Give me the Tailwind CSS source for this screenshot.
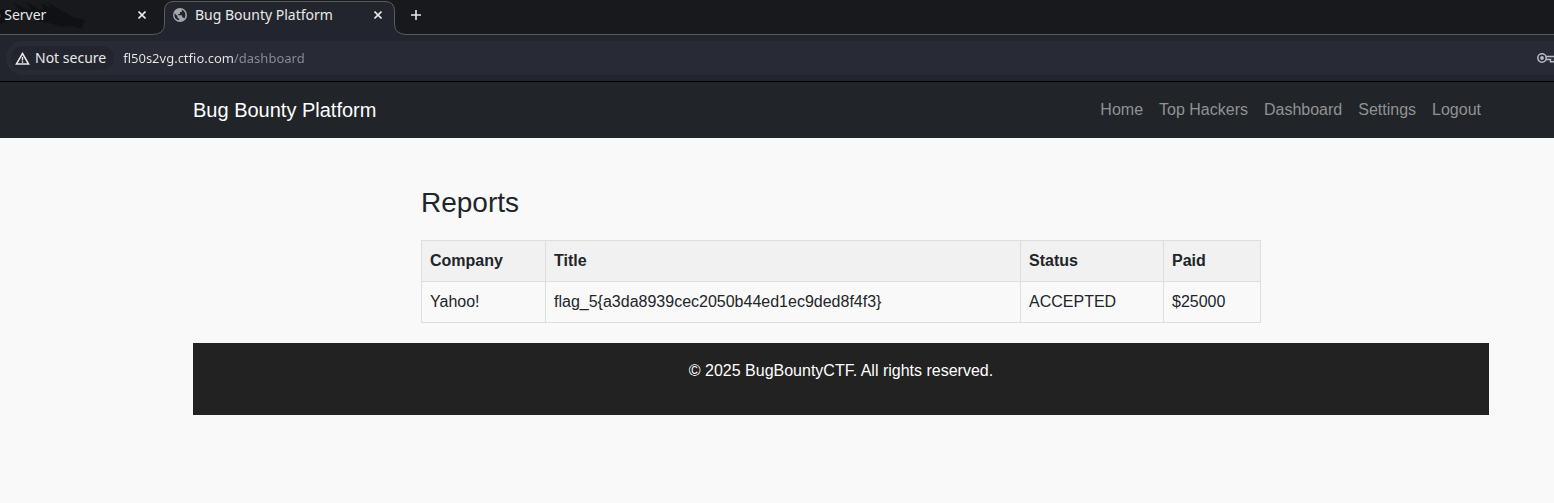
<!DOCTYPE html>
<html lang="en">
<head>
  <meta charset="UTF-8">
  <title>Bug Bounty Platform</title>
  <meta name="viewport" content="width=device-width, initial-scale=1.0">
  <script src="https://cdn.jsdelivr.net/npm/@tailwindcss/browser@4"></script>
</head>
<body class="bg-[#f9f9f9] text-[#212529] font-['Liberation_Sans',sans-serif] min-h-screen overflow-x-hidden">

  <!-- Browser window -->
  <div class="bg-[#23252e] border-b border-black text-[#e8e8e8] font-['Noto_Sans',sans-serif]">
    <!-- Tabs -->
    <div class="flex h-[35px] text-sm">
      <div class="relative flex items-center w-[152px] pr-1 pb-1 bg-[#18191d] border-b border-[#5b5c62]">
        <svg class="absolute left-0 top-0" width="90" height="30" viewBox="0 0 270 90" fill="#101114" aria-hidden="true">
          <path d="M0 28 L28 30 L60 34 L40 8 L80 28 L94 30 L78 6 L118 28 L132 30 L124 10 L158 28 L140 6 L196 38 L222 52 L255 60 L244 86 L214 78 L184 80 L150 70 L118 64 L86 46 L52 50 L20 62 L0 74 Z" />
        </svg>
        <span class="relative flex-1 -ml-2">b Server</span>
        <button class="relative flex items-center justify-center size-3" aria-label="Close tab">
          <svg width="8" height="8" viewBox="0 0 8 8" stroke="currentColor" stroke-width="1.6"><path d="M.5 .5 7.5 7.5M7.5 .5 .5 7.5" /></svg>
        </button>
      </div>
      <svg class="shrink-0" width="24" height="35" viewBox="0 0 24 35" aria-hidden="true">
        <path d="M0 0 H24 V1.5 H22 Q12.5 1.5 12.5 11 V24 Q12.5 34.5 0 34.5 Z" fill="#18191d" />
        <path d="M0 34.5 Q12.5 34.5 12.5 24 V11 Q12.5 1.5 22 1.5 H24" fill="none" stroke="#5b5c62" />
      </svg>
      <div class="bg-[#18191d] pt-px">
        <div class="flex items-center w-[212px] h-[34px] pb-2 bg-[#23252e] border-t border-[#5b5c62] -ml-1 pl-px">
          <svg width="14" height="14" viewBox="0 0 14 14" aria-hidden="true">
            <circle cx="7" cy="7" r="7" fill="#a5a7ad" />
            <path d="M1.6 5.2 L4.4 8 V9.2 Q4.4 10 5.4 10.2 L6.2 10.4 V12.3 Q2 11.6 1.4 7.4 Z M8.6 1.7 Q12.4 3 12.4 7 Q12.4 9 11.3 10.5 Q10.8 9.6 9.8 9.6 H9.2 V8 Q9.2 7.3 8.4 7.3 H5.2 V6 H6.3 Q7 6 7 5.3 V4.1 H8 Q9 4.1 9 3 Z" fill="#23252e" />
          </svg>
          <span class="flex-1 ml-2">Bug Bounty Platform</span>
          <button class="flex items-center justify-center size-3" aria-label="Close tab">
            <svg width="8" height="8" viewBox="0 0 8 8" stroke="currentColor" stroke-width="1.6"><path d="M.5 .5 7.5 7.5M7.5 .5 .5 7.5" /></svg>
          </button>
        </div>
      </div>
      <svg class="shrink-0 -ml-px" width="24" height="35" viewBox="0 0 24 35" aria-hidden="true">
        <path d="M0 2 H3 Q11.5 2 11.5 11 V24 Q11.5 34.5 24 34.5 V35 H0 Z" fill="#23252e" />
        <path d="M24 0 H0 V1.5 H2 Q11.5 1.5 11.5 11 V24 Q11.5 34.5 24 34.5 Z" fill="#18191d" />
        <path d="M24 34.5 Q11.5 34.5 11.5 24 V11 Q11.5 1.5 2 1.5 H0" fill="none" stroke="#5b5c62" />
      </svg>
      <div class="flex flex-1 items-center pb-1 pl-1 bg-[#18191d] border-b border-[#5b5c62]">
        <button aria-label="New tab">
          <svg width="10" height="10" viewBox="0 0 10 10" stroke="currentColor" stroke-width="1.6"><path d="M5 0V10M0 5H10" /></svg>
        </button>
      </div>
    </div>

    <!-- Address bar -->
    <div class="pt-1.5 pb-[6px] pl-1.5">
      <div class="flex items-center h-[34px] pl-[5px] bg-[#282a36] rounded-l-full text-sm">
        <button class="flex items-center gap-[5px] h-6 pl-1 pr-2 rounded-full bg-[#23252e]">
          <svg width="15" height="13" viewBox="0 0 15 13" aria-hidden="true">
            <path d="M7.5 1.5 L13.6 12 H1.4 Z" fill="none" stroke="currentColor" stroke-width="1.5" />
            <path d="M7.5 5V8.4M7.5 9.3V10.8" stroke="currentColor" stroke-width="1.4" />
          </svg>
          Not secure
        </button>
        <input type="text" aria-label="Address" value="fl50s2vg.ctfio.com/dashboard" class="flex-1 min-w-0 ml-[9px] text-[13px] outline-none text-transparent bg-clip-text bg-[linear-gradient(to_right,#e8e8e8_111px,#8d8e95_111px)]">
        <button class="w-[17px] overflow-hidden" aria-label="Saved passwords">
          <svg width="20" height="12" viewBox="0 0 20 12" fill="none" stroke="#b9bac0" stroke-width="1.5">
            <circle cx="5" cy="6" r="4.2" />
            <circle cx="5" cy="6" r="1.9" fill="#b9bac0" stroke="none" />
            <path d="M9 4.6 H19 V7.4 H17.5 V9.8 H13.5 V7.4 H9" />
          </svg>
        </button>
      </div>
    </div>
  </div>

  <!-- Site navigation -->
  <nav class="flex items-center justify-between h-14 pl-[193px] pr-[73px] bg-[#212529]">
    <a href="/" class="text-xl text-white">Bug Bounty Platform</a>
    <div class="flex gap-4 text-[#909294]">
      <a href="/">Home</a>
      <a href="/hackers">Top Hackers</a>
      <a href="/dashboard">Dashboard</a>
      <a href="/settings">Settings</a>
      <a href="/logout">Logout</a>
    </div>
  </nav>

  <div class="pl-[193px] pr-[65px]">
    <main class="max-w-[840px] mx-auto pt-12 pb-5">
      <h2 class="text-[28px] leading-[34px] mb-5">Reports</h2>
      <table class="w-full border-collapse text-left">
        <thead>
          <tr class="bg-[#f1f1f1]">
            <th class="border border-[#dddddd] p-2 w-[124px]">Company</th>
            <th class="border border-[#dddddd] p-2">Title</th>
            <th class="border border-[#dddddd] p-2 w-[143px]">Status</th>
            <th class="border border-[#dddddd] p-2 w-[97px]">Paid</th>
          </tr>
        </thead>
        <tbody>
          <tr>
            <td class="border border-[#dddddd] p-2">Yahoo!</td>
            <td class="border border-[#dddddd] p-2">flag_5{a3da8939cec2050b44ed1ec9ded8f4f3}</td>
            <td class="border border-[#dddddd] p-2">ACCEPTED</td>
            <td class="border border-[#dddddd] p-2">$25000</td>
          </tr>
        </tbody>
      </table>
    </main>
    <footer class="bg-[#222222] text-white text-center pt-4 pb-8">
      <p>© 2025 BugBountyCTF. All rights reserved.</p>
    </footer>
  </div>
</body>
</html>
